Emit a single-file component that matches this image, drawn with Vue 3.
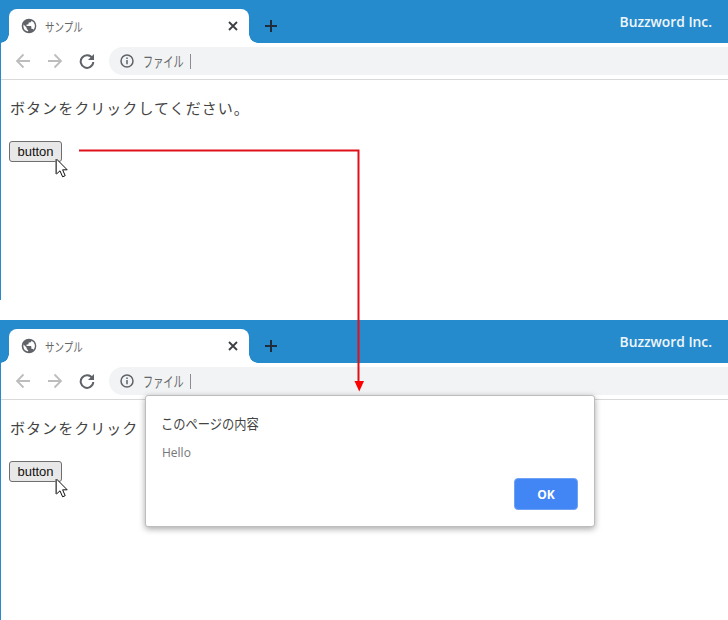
<script setup>
const windows = [
  { id: 1, dialog: false, message: 'ボタンをクリックしてください。' },
  { id: 2, dialog: true, message: 'ボタンをクリック' },
]
</script>

<template>
  <div class="page">
    <section v-for="w in windows" :key="w.id" class="win">
      <header class="strip">
        <div class="tab">
          <svg class="globe" width="16" height="16" viewBox="0 0 24 24">
            <path fill="#5f6368" d="M12 1a11 11 0 1 0 0 22 11 11 0 0 0 0-22zM3.600 12c0-.8.1-1.500.3-2.200L8.500 14.500v1.100c0 1.200 1 2.100 2.100 2.100v2.600A8.400 8.400 0 0 1 3.600 12zm14.900 5.600c-.3-.9-1.100-1.500-2-1.500h-1v-3.200c0-.6-.5-1-1-1H8.300V9.800h2.100c.6 0 1-.5 1-1V6.600h2.100c1.200 0 2.100-1 2.100-2.100V4a8.400 8.400 0 0 1 2.900 13.600z"/>
          </svg>
          <span class="tab-title">サンプル</span>
          <svg class="close" width="10" height="10" viewBox="0 0 10 10">
            <path d="M1 1l8 8M9 1l-8 8" stroke="#3c4043" stroke-width="1.800" fill="none"/>
          </svg>
        </div>
        <svg class="plus" width="12" height="12" viewBox="0 0 12 12">
          <path d="M6 0v12M0 6h12" stroke="#1f2d3a" stroke-width="2" fill="none"/>
        </svg>
        <span class="brand">Buzzword Inc.</span>
      </header>

      <div class="toolbar">
        <svg class="nav" width="16" height="16" viewBox="0 0 16 16">
          <path d="M15 8H2M8.500 1.500L2 8l6.500 6.500" stroke="#bdbdbd" stroke-width="1.800" fill="none"/>
        </svg>
        <svg class="nav" width="16" height="16" viewBox="0 0 16 16">
          <path d="M1 8h13M7.500 1.500L14 8l-6.500 6.500" stroke="#bdbdbd" stroke-width="1.800" fill="none"/>
        </svg>
        <svg class="nav" width="16" height="16" viewBox="0 0 16 16">
          <path d="M13.400 5.300A6.300 6.300 0 1 0 14.300 9" stroke="#5f6368" stroke-width="2" fill="none"/>
          <path d="M15 1v6H9z" fill="#5f6368"/>
        </svg>
        <div class="omnibox">
          <svg width="14" height="14" viewBox="0 0 14 14">
            <circle cx="7" cy="7" r="6" stroke="#5f6368" stroke-width="1.500" fill="none"/>
            <path d="M7 6v4.200M7 3.400v1.500" stroke="#5f6368" stroke-width="1.500" fill="none"/>
          </svg>
          <span class="scheme">ファイル</span>
          <span class="divider"></span>
        </div>
      </div>

      <main class="content">
        <p class="message">{{ w.message }}</p>
        <div class="btn-wrap">
          <button class="demo-btn" type="button">button</button>
          <svg class="cursor" width="14" height="20" viewBox="0 0 14 20">
            <path d="M1.500 1v15l3.500-3.200 2.600 6 2.600-1.100-2.600-5.900h4.600z" fill="#fff" stroke="#111" stroke-width="1"/>
            <path d="M1 1v15" stroke="#777" stroke-width="1.500" fill="none"/>
          </svg>
        </div>
      </main>

      <div v-if="w.dialog" class="dialog">
        <div class="dialog-title">このページの内容</div>
        <div class="dialog-text">Hello</div>
        <div class="dialog-actions">
          <button class="ok" type="button">OK</button>
        </div>
      </div>
    </section>

    <svg class="flow" width="728" height="620" viewBox="0 0 728 620">
      <path d="M79 150.500H358.500V382" stroke="#e0101a" stroke-width="2" fill="none"/>
      <path d="M354.500 381h9.500l-4.750 10.500z" fill="#f00"/>
    </svg>
  </div>
</template>

<style>
html, body { margin: 0; background: #fff; }
</style>

<style scoped>
.page {
  position: relative;
  width: 728px;
  height: 620px;
  overflow: hidden;
  display: flex;
  flex-direction: column;
  gap: 20px;
  font-family: "Noto Sans CJK JP", "Noto Sans", sans-serif;
}
.win {
  position: relative;
  height: 300px;
  box-sizing: border-box;
  border-left: 1px solid #268bcc;
  overflow: hidden;
  background: #fff;
}
.strip {
  height: 43px;
  margin-left: -1px;
  background: #268bcc;
  display: flex;
  align-items: flex-end;
  padding-left: 9px;
  position: relative;
}
.tab {
  position: relative;
  box-sizing: border-box;
  width: 240px;
  height: 34px;
  background: #fff;
  border-radius: 8px 8px 0 0;
  display: flex;
  align-items: center;
  padding: 0 11px 0 12px;
}
.tab::before,
.tab::after {
  content: "";
  position: absolute;
  bottom: 0;
  width: 9px;
  height: 9px;
}
.tab::before {
  left: -9px;
  background: radial-gradient(circle at 0 0, #268bcc 8.500px, #fff 9px);
}
.tab::after {
  right: -9px;
  background: radial-gradient(circle at 100% 0, #268bcc 8.500px, #fff 9px);
}
.globe { flex: none; }
.tab-title {
  margin-left: 8px;
  flex: 1;
  font-size: 12.500px;
  color: #666;
  transform: scaleX(0.76);
  transform-origin: left center;
}
.close { flex: none; }
.plus { margin: 0 0 11px 16px; }
.brand {
  margin-left: auto;
  margin-right: 16px;
  align-self: center;
  margin-top: -1px;
  font-family: "Open Sans", sans-serif;
  font-weight: 600;
  font-size: 13.800px;
  color: #eef6fc;
}
.toolbar {
  box-sizing: border-box;
  height: 37px;
  display: flex;
  align-items: center;
  gap: 16px;
  padding-left: 14px;
  border-bottom: 1px solid #d9d9d9;
}
.nav { flex: none; }
.omnibox {
  flex: 1;
  height: 28px;
  margin-left: -2px;
  background: #f1f3f4;
  border-radius: 14px 0 0 14px;
  display: flex;
  align-items: center;
  padding-left: 11px;
}
.scheme {
  margin: -2px -17px 0 9px;
  font-size: 14.500px;
  color: #666;
  transform: scaleX(0.7);
  transform-origin: left center;
}
.divider {
  width: 1px;
  height: 15px;
  margin-left: 6px;
  background: #8a8d91;
}
.content { padding: 16px 0 0 8px; }
.message {
  margin: 0 0 0 1px;
  height: 24px;
  line-height: 24px;
  font-size: 15px;
  letter-spacing: 1.050px;
  color: #444;
}
.btn-wrap {
  position: relative;
  margin-top: 21px;
  width: 53px;
}
.demo-btn {
  display: block;
  box-sizing: border-box;
  width: 53px;
  height: 21px;
  padding: 0;
  background: #e8e8e8;
  border: 1px solid #6f6f6f;
  border-radius: 3px;
  font-family: "Liberation Sans", sans-serif;
  font-size: 13px;
  color: #111;
}
.cursor {
  position: absolute;
  left: 46px;
  top: 17px;
}
.dialog {
  position: absolute;
  left: 144px;
  top: 75px;
  box-sizing: border-box;
  width: 450px;
  height: 132px;
  padding: 17px 16px 0 15px;
  background: #fff;
  border: 1px solid #bdbdbd;
  border-radius: 3px;
  box-shadow: 0 2px 6px rgba(0, 0, 0, 0.35);
}
.dialog-title {
  height: 20px;
  line-height: 20px;
  font-size: 14px;
  color: #444;
  transform: scaleX(0.875);
  transform-origin: left center;
}
.dialog-text {
  margin-top: 12px;
  margin-left: 1px;
  height: 16px;
  line-height: 16px;
  font-family: "Open Sans", sans-serif;
  font-size: 12px;
  color: #777;
}
.dialog-actions {
  display: flex;
  justify-content: flex-end;
  margin-top: 17px;
}
.ok {
  width: 64px;
  height: 32px;
  padding: 0;
  background: #4285f4;
  border: 1px solid #6ea2f5;
  border-radius: 4px;
  font-family: "Open Sans", sans-serif;
  font-weight: 700;
  font-size: 12px;
  color: #fff;
}
.flow {
  position: absolute;
  left: 0;
  top: 0;
  pointer-events: none;
}
</style>
